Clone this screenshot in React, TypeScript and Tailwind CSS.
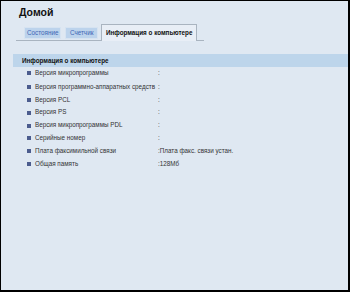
const rows: [string, string][] = [
  ['Версия микропрограммы', ''],
  ['Версия программно-аппаратных средств', ''],
  ['Версия PCL', ''],
  ['Версия PS', ''],
  ['Версия микропрограммы PDL', ''],
  ['Серийные номер', ''],
  ['Плата факсимильной связи', 'Плата факс. связи устан.'],
  ['Общая память', '128Мб'],
]

export default function App() {
  return (
    <div
      className="h-[292px] w-[350px] overflow-hidden whitespace-nowrap border-t border-l border-r-2 border-b-2 border-black bg-[#dfe8f2] text-[#222]"
      style={{ fontFamily: '"Liberation Sans", Arial, sans-serif' }}
    >
      <h1 className="pl-[18px] pt-[4px] text-[10.5px] font-bold leading-[14px] text-[#111]">Домой</h1>

      <div className="ml-[15px] mt-[5px] flex w-[188px] items-end border-b border-[#a9b4c0] pl-[8px]">
        <div className="mb-px border border-[#d6e3f1] bg-[#bcd3ec] px-[2px] text-[6.3px] leading-[10px] text-[#3c66b4]">
          Состояние
        </div>
        <div className="mb-px ml-[4px] border border-[#d6e3f1] bg-[#bcd3ec] px-[3.5px] text-[6.3px] leading-[10px] text-[#3c66b4]">
          Счетчик
        </div>
        <div className="-mb-px ml-[3px] border border-b-0 border-[#a9b4c0] bg-[#e8eef6] px-[4px] pb-[4px] pt-[3px] text-[6.3px] font-bold leading-[9px] text-[#111]">
          Информация о компьютере
        </div>
      </div>

      <div className="ml-[12px] mt-[13px] bg-[#bdd5eb] pl-[9px] text-[6.3px] font-bold leading-[13px] text-[#111]">
        Информация о компьютере
      </div>

      <div className="pl-[26px] pt-[0px]">
        {rows.map(([label, value], i) => (
          <div
            key={label}
            className={`flex items-center text-[6.3px] leading-[12.8px] text-[#333] ${i === 0 ? 'mb-[1px]' : ''}`}
          >
            <span className="mr-[4px] h-[4px] w-[4px] bg-[#4b5c8e]" />
            <span className="w-[123px]">{label}</span>
            <span>:{value}</span>
          </div>
        ))}
      </div>
    </div>
  )
}
